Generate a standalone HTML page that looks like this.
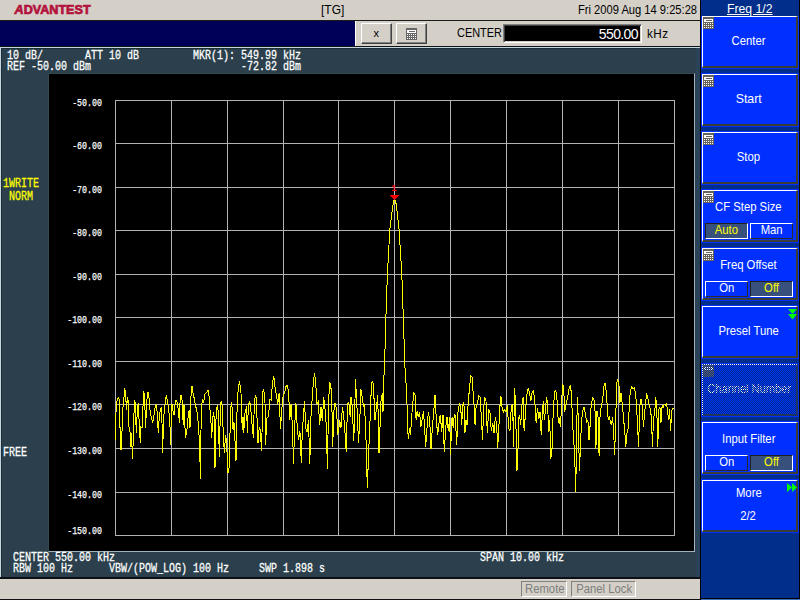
<!DOCTYPE html>
<html><head><meta charset="utf-8"><title>[TG]</title>
<style>
html,body{margin:0;padding:0;}
body{width:800px;height:600px;overflow:hidden;position:relative;background:#d4d0c8;font-family:"Liberation Sans",sans-serif;font-size:12px;color:#000;}
div,svg{position:absolute;box-sizing:border-box;}
.ui{white-space:nowrap;transform-origin:0 0;}
#navy{left:0;top:21px;width:355px;height:25px;background:#000058;}
#l20{left:0;top:20px;width:700px;height:1px;background:#1a1a1a;}
#l46{left:0;top:46px;width:700px;height:1px;background:#101418;}
#slate{left:0;top:47px;width:700px;height:530px;background:#2b3f4c;border-top:1px solid #c4d6dc;border-left:1px solid #c5d4e0;box-shadow:inset 1px 1px 0 #1c3038;}
#l578{left:0;top:577px;width:700px;height:2px;background:#0c1014;}
#plot{left:48px;top:73px;width:647px;height:479px;background:#000;border-top:1px solid #31494f;border-left:1px solid #31494f;border-right:1px solid #9fb4c0;border-bottom:1px solid #9fb4c0;}
#vsep{left:700px;top:0;width:1px;height:600px;background:#000;}
#vs2{left:696px;top:48px;width:4px;height:529px;background:#2b4359;}
#panel{left:701px;top:0;width:99px;height:600px;background:#002e8a;border-right:1px solid #000;}
#pb{left:701px;top:598px;width:99px;height:2px;background:#3c6ebe;border-top:1px solid #000;}
#gb{left:0;top:599px;width:700px;height:1px;background:#111;}
.mono{-webkit-text-stroke:.3px currentColor;font-family:"Liberation Mono",monospace;font-size:13.5px;line-height:12px;color:#fff;white-space:pre;transform:scaleX(.7407);transform-origin:0 0;letter-spacing:0;}
.yel{color:#ff0;}
.yl{-webkit-text-stroke:.25px #fff;left:38.5px;width:63px;text-align:right;font-family:"Liberation Mono",monospace;font-size:10.5px;line-height:10px;color:#fff;white-space:pre;transform:scaleX(.79);transform-origin:100% 0;}
.wb{background:#d4d0c8;border:1px solid;border-color:#fff #404040 #404040 #fff;box-shadow:inset -1px -1px 0 #808080;}
.bo{left:0;width:98px;height:54px;background:#0030ff;}
.btn{left:1px;top:1px;width:96px;height:52px;background:#0030ff;border-top:1px solid #fff;border-left:1px solid #fff;border-right:2px solid #3c3e36;border-bottom:2px solid #3c3e36;}
.bl{left:-1px;width:93px;text-align:center;color:#fff;font-size:13px;line-height:14px;white-space:nowrap;}
.ci{position:absolute;}
.bl span,.sb span,.st span{display:inline-block;transform:scaleX(.87);transform-origin:50% 50%;white-space:nowrap;}
.sb{top:32px;width:43px;height:16px;border:1px solid;border-color:#fff #2a2a2a #2a2a2a #fff;color:#fff;font-size:13px;line-height:11px;text-align:center;background:#0030ff;}
.sb.on{border-color:#202020 #fff #fff #202020;background:#38507c;color:#ff0;}
.dither{left:-1px;top:-1px;width:96px;height:52px;background-image:repeating-conic-gradient(#002e8a 0 25%,transparent 0 50%);background-size:2px 2px;}
.st{white-space:nowrap;top:581px;height:16px;border:1px solid;border-color:#808080 #fff #fff #808080;color:#7e7e7e;font-size:13px;line-height:13px;text-align:center;}
</style></head><body>
<div id="l20"></div><div style="left:355px;top:21px;width:1px;height:25px;background:#fff"></div><div id="navy"></div><div id="l46"></div>
<svg style="left:12px;top:3px" width="84" height="14" viewBox="0 0 84 14"><text x="2.6" y="10.7" font-family="Liberation Sans, sans-serif" font-weight="bold" font-size="12.5" fill="#b3123c" stroke="#b3123c" stroke-width="0.7" textLength="76" lengthAdjust="spacingAndGlyphs"><tspan font-style="italic">A</tspan>DVANTEST</text></svg>
<div class="ui" style="left:321px;top:2px;font-size:13px;transform:scaleX(.92)">[TG]</div>
<div class="ui" style="left:578px;top:2px;font-size:13px;transform:scaleX(.858)">Fri 2009 Aug 14 9:25:28</div>
<div class="wb" style="left:361px;top:23px;width:31px;height:21px;"><div class="ui" style="left:11.5px;top:3px;font-size:11px;line-height:12px">x</div></div>
<div class="wb" style="left:396px;top:23px;width:31px;height:21px;">
<svg class="ci" style="left:9px;top:4px" width="11" height="12" viewBox="0 0 11 12" shape-rendering="crispEdges"><rect width="11" height="12" fill="#666"/><rect x="1" y="2" width="9" height="3" fill="#fff"/><rect x="3" y="3" width="6" height="1" fill="#666"/><rect x="1" y="6" width="1" height="1" fill="#fff"/><rect x="3" y="6" width="1" height="1" fill="#fff"/><rect x="5" y="6" width="1" height="1" fill="#fff"/><rect x="7" y="6" width="1" height="1" fill="#fff"/><rect x="9" y="6" width="1" height="1" fill="#fff"/><rect x="1" y="8" width="1" height="1" fill="#fff"/><rect x="3" y="8" width="1" height="1" fill="#fff"/><rect x="5" y="8" width="1" height="1" fill="#fff"/><rect x="7" y="8" width="1" height="1" fill="#fff"/><rect x="9" y="8" width="1" height="1" fill="#fff"/><rect x="1" y="10" width="1" height="1" fill="#fff"/><rect x="3" y="10" width="1" height="1" fill="#fff"/><rect x="5" y="10" width="1" height="1" fill="#fff"/><rect x="7" y="10" width="1" height="1" fill="#fff"/><rect x="9" y="10" width="1" height="1" fill="#fff"/></svg></div>
<div class="ui" style="left:457px;top:25px;font-size:13px;transform:scaleX(.84)">CENTER</div>
<div style="left:503px;top:24px;width:139px;height:19px;background:#000;border:1px solid;border-color:#808080 #fff #fff #808080;box-shadow:inset 1px 1px 0 #404040, inset -1px -1px 0 #d4d0c8;"><div style="right:3px;top:2px;color:#fff;font-size:14px;line-height:14px;white-space:nowrap;letter-spacing:-.6px">550.00</div></div>
<div class="ui" style="left:647px;top:26px;font-size:13px;transform:scaleX(.9);letter-spacing:.5px">kHz</div>

<div id="slate"></div><div id="l578"></div>
<div id="plot"></div>
<svg style="left:0;top:0" width="700" height="600" viewBox="0 0 700 600">
<g shape-rendering="crispEdges"><rect x="115" y="100" width="1" height="436" fill="#b2b2b2"/><rect x="171" y="100" width="1" height="436" fill="#b2b2b2"/><rect x="227" y="100" width="1" height="436" fill="#b2b2b2"/><rect x="283" y="100" width="1" height="436" fill="#b2b2b2"/><rect x="338" y="100" width="1" height="436" fill="#b2b2b2"/><rect x="394" y="100" width="1" height="436" fill="#b2b2b2"/><rect x="450" y="100" width="1" height="436" fill="#b2b2b2"/><rect x="506" y="100" width="1" height="436" fill="#b2b2b2"/><rect x="562" y="100" width="1" height="436" fill="#b2b2b2"/><rect x="618" y="100" width="1" height="436" fill="#b2b2b2"/><rect x="674" y="100" width="1" height="436" fill="#b2b2b2"/><rect x="115" y="100" width="560" height="1" fill="#b2b2b2"/><rect x="115" y="143" width="560" height="1" fill="#b2b2b2"/><rect x="115" y="187" width="560" height="1" fill="#b2b2b2"/><rect x="115" y="230" width="560" height="1" fill="#b2b2b2"/><rect x="115" y="274" width="560" height="1" fill="#b2b2b2"/><rect x="115" y="317" width="560" height="1" fill="#b2b2b2"/><rect x="115" y="361" width="560" height="1" fill="#b2b2b2"/><rect x="115" y="404" width="560" height="1" fill="#b2b2b2"/><rect x="115" y="448" width="560" height="1" fill="#b2b2b2"/><rect x="115" y="492" width="560" height="1" fill="#b2b2b2"/><rect x="115" y="535" width="560" height="1" fill="#b2b2b2"/></g>
<polyline points="115.5,440.0 116.2,403.3 117.5,399.2 118.7,397.5 119.7,401.7 120.3,450.0 121.7,449.2 122.3,415.0 123.7,400.0 124.8,388.3 125.7,397.5 126.7,410.0 127.3,397.5 128.3,400.8 129.0,426.7 130.0,431.7 130.7,446.7 131.7,433.3 132.3,459.2 133.0,446.7 133.7,418.3 134.7,400.0 135.3,403.3 136.3,433.3 137.0,416.7 138.2,403.3 138.7,410.0 139.3,426.7 140.3,443.3 141.0,426.7 142.0,428.3 143.0,406.7 143.7,392.5 144.3,393.3 145.0,410.0 145.7,428.3 146.3,408.3 147.3,395.8 148.0,391.7 149.0,398.3 150.0,410.0 151.2,416.7 152.7,422.5 154.0,415.0 155.0,408.3 156.3,404.2 157.3,413.3 158.3,433.3 159.3,416.7 160.3,410.0 161.3,407.5 162.0,423.3 162.7,453.3 163.3,426.7 164.3,408.3 165.3,403.3 166.3,395.0 167.3,400.0 168.3,407.5 169.3,415.0 170.0,426.7 170.7,445.0 171.3,410.0 172.0,404.2 173.0,410.8 174.0,415.0 175.0,405.0 176.0,400.0 177.0,401.7 178.0,408.3 178.7,413.3 179.3,422.5 180.0,403.3 181.0,395.0 182.0,400.0 182.7,415.0 183.3,425.0 184.0,405.0 184.7,416.7 185.3,438.3 186.3,433.3 187.3,426.7 188.3,415.0 189.3,410.0 190.0,427.5 190.8,398.3 192.0,385.8 193.0,393.3 194.2,398.3 195.3,405.0 196.7,410.0 197.7,416.7 198.7,431.7 199.7,443.3 200.3,478.7 201.0,430.0 201.7,404.2 202.7,400.0 203.7,403.3 204.7,394.2 205.8,393.3 207.0,391.7 208.0,389.7 209.0,395.8 210.0,410.0 211.0,422.5 211.7,438.3 212.3,426.7 213.3,412.5 214.3,417.5 215.0,468.0 215.7,430.0 216.3,408.3 217.3,406.7 218.0,410.0 218.7,430.0 219.3,456.7 220.0,426.7 220.7,403.3 221.7,400.8 222.3,408.3 223.0,426.7 224.0,446.7 224.7,453.3 225.3,435.0 226.0,438.3 226.7,445.0 228.0,473.3 229.3,466.7 230.0,433.3 230.7,410.0 231.3,402.5 232.0,406.7 232.7,426.7 233.3,430.0 234.0,422.5 234.7,433.3 235.3,448.3 236.0,461.0 236.7,426.7 237.3,398.3 238.3,390.0 239.3,381.3 240.3,386.7 241.0,393.3 241.7,415.0 242.3,430.0 243.0,416.7 243.7,433.3 244.7,415.0 245.7,410.0 246.7,405.8 247.3,433.3 248.0,415.0 248.7,404.2 249.7,401.7 250.7,405.0 251.3,418.3 252.3,426.7 253.3,437.5 254.0,415.0 254.7,400.0 255.7,395.0 256.7,400.0 257.3,433.3 258.0,443.3 258.7,431.7 259.7,426.7 260.7,433.3 261.3,450.8 262.0,433.3 262.7,393.3 263.3,389.2 264.3,393.3 265.0,403.3 265.7,445.0 266.3,426.7 267.0,418.3 268.0,416.7 269.0,410.0 270.0,399.2 271.1,400.0 272.5,382.7 273.8,376.0 275.1,388.0 276.5,396.0 277.8,404.0 279.1,393.3 280.5,429.3 281.8,409.3 283.1,396.0 284.5,393.3 285.8,386.7 287.1,385.3 288.5,390.7 289.8,420.0 291.1,404.0 292.5,428.0 293.5,464.0 294.6,428.0 295.9,402.7 297.3,428.0 298.6,440.0 299.9,430.7 301.3,462.7 302.3,430.7 303.4,417.3 304.5,401.3 305.8,428.0 307.1,432.0 308.5,420.0 309.8,464.0 310.9,417.3 312.2,398.7 313.5,380.0 314.6,373.3 315.7,382.7 317.0,404.0 318.3,401.3 319.7,425.3 321.0,406.7 322.3,421.3 323.7,397.3 325.0,409.3 326.3,425.3 327.4,469.3 328.5,406.7 329.5,382.7 330.6,384.0 331.7,396.0 332.7,446.7 333.8,412.0 335.1,402.7 336.5,409.3 337.8,433.3 338.5,432.0 339.8,420.0 340.9,428.0 342.5,406.7 343.8,417.3 344.9,430.7 346.2,452.0 347.5,404.0 348.9,402.7 350.2,417.3 351.0,397.3 352.3,406.7 353.7,441.3 354.5,420.0 355.5,378.7 357.1,409.3 358.5,442.7 359.8,420.0 360.9,389.3 362.2,397.3 363.5,406.7 364.3,404.0 365.7,428.0 367.3,488.0 368.9,446.7 370.2,417.3 371.5,382.7 372.9,381.3 374.2,401.3 375.0,420.0 376.3,409.3 377.7,394.7 379.0,453.3 380.3,420.0 381.1,398.7 382.5,393.3 383.0,412.0 383.8,380.0 385.0,350 385.9,317.5 387.4,274 389.8,230 392.6,207 394,200.5 395.5,200.5 396.6,207 399.1,230 401.8,274 403.3,317.5 404.2,345 404.9,366.7 405.9,380.0 407.0,404.0 407.5,425.3 408.3,438.7 409.7,428.0 410.5,434.7 411.5,420.0 412.6,404.0 413.9,393.3 415.0,394.7 416.1,420.0 417.1,410.7 418.2,417.3 419.5,412.0 420.9,426.7 422.2,418.7 423.5,410.7 424.6,428.0 425.7,446.7 427.0,428.0 428.3,412.0 429.7,420.0 431.0,449.3 432.3,428.0 433.7,412.0 435.0,394.7 436.3,420.0 437.7,434.7 439.0,422.7 440.3,414.7 441.7,432.0 443.0,414.7 444.3,452.0 445.7,428.0 447.0,417.3 448.3,430.7 449.7,417.3 450.5,454.7 451.8,420.0 452.1,417.3 453.2,428.0 454.3,414.7 455.3,416.0 456.7,445.3 458.0,412.0 459.3,404.0 460.7,406.7 461.7,425.3 462.8,404.0 463.9,402.7 464.9,433.3 466.0,420.0 467.1,425.3 468.1,404.0 469.5,388.0 470.8,376.0 472.1,377.3 473.2,393.3 474.0,404.0 475.1,425.3 476.1,406.7 477.5,402.7 478.8,396.0 480.1,397.3 481.5,420.0 482.5,440.0 483.6,409.3 484.7,397.3 486.0,401.3 487.3,433.3 488.7,409.3 490.0,413.3 491.3,430.7 492.7,422.7 494.0,433.3 495.3,417.3 496.7,425.3 497.7,448.0 498.8,428.0 499.9,406.7 500.9,396.0 502.0,406.7 503.3,412.0 504.7,409.3 506.0,412.0 507.3,405.3 508.7,428.0 510.0,430.7 511.3,406.7 512.7,404.0 513.5,446.7 514.5,388.0 515.6,404.0 516.7,470.7 517.7,468.0 518.5,420.0 519.6,414.7 520.7,425.3 522.0,404.0 523.1,397.3 524.1,430.7 525.2,417.3 526.3,400.0 527.3,392.0 528.4,388.0 529.5,393.3 530.8,401.3 532.1,392.0 533.5,390.7 534.8,401.3 536.1,422.7 537.5,408.0 538.8,418.7 540.1,412.0 541.2,434.7 542.3,414.7 543.3,401.3 544.4,420.0 545.5,409.3 546.5,397.3 547.6,404.0 548.7,432.0 549.7,420.0 550.8,458.7 551.9,452.0 552.9,420.0 554.0,400.0 555.1,390.7 556.1,392.0 557.2,401.3 558.3,422.7 559.3,420.0 560.4,426.7 561.5,406.7 562.5,384.0 563.6,386.7 564.7,412.0 565.7,406.7 566.8,401.3 567.7,397.3 569.0,389.3 570.3,385.3 571.4,393.3 572.5,420.0 573.5,438.7 574.6,452.0 575.7,492.0 576.5,446.7 577.3,397.3 578.3,420.0 579.4,470.7 580.5,446.7 581.5,420.0 582.9,410.7 584.2,406.7 585.5,414.7 586.9,422.7 587.9,420.0 589.0,440.0 590.1,425.3 591.1,406.7 592.5,397.3 593.8,398.7 594.9,406.7 595.9,449.3 597.0,410.7 598.1,417.3 599.1,456.0 600.2,409.3 601.5,406.7 602.9,397.3 603.9,386.7 605.0,382.7 606.1,390.7 607.1,404.0 608.2,420.0 609.3,416.0 610.3,421.3 611.4,425.3 612.5,417.3 613.5,428.0 614.6,454.7 615.7,420.0 616.7,382.7 617.8,380.0 618.9,384.0 619.9,402.7 621.0,393.3 622.3,404.0 623.7,420.0 624.7,430.7 625.8,446.7 626.9,433.3 628.2,428.0 629.3,406.7 630.3,390.7 631.7,386.7 633.0,389.3 634.3,388.0 635.4,393.3 636.5,404.0 637.5,425.3 638.6,446.7 639.7,406.7 641.0,398.7 642.3,406.7 643.4,426.7 644.5,414.7 645.5,404.0 646.6,393.3 647.7,397.3 649.0,404.0 650.3,409.3 651.4,417.3 652.5,446.7 653.5,417.3 654.6,414.7 655.7,397.3 656.7,406.7 657.8,446.7 658.9,409.3 659.9,406.7 661.0,422.7 662.1,405.3 663.1,408.0 664.2,404.0 665.3,405.3 666.3,404.0 667.4,408.0 668.5,420.0 669.5,409.3 670.6,430.7 671.7,410.7 672.7,408.0 674.1,408.0" fill="none" stroke="#ffff00" stroke-width="1" stroke-linejoin="miter" shape-rendering="crispEdges"/>
<polygon points="389.5,195 399.5,195 394.5,200" fill="#f00"/>
<text x="391.3" y="190.9" style="font-family:'Liberation Sans',sans-serif;font-weight:bold;font-size:9.5px" fill="#f00">1</text>
</svg>
<div class="yl" style="top:97.5px">-50.00</div><div class="yl" style="top:140.5px">-60.00</div><div class="yl" style="top:184.5px">-70.00</div><div class="yl" style="top:227.5px">-80.00</div><div class="yl" style="top:271.5px">-90.00</div><div class="yl" style="top:314.5px">-100.00</div><div class="yl" style="top:358.5px">-110.00</div><div class="yl" style="top:401.5px">-120.00</div><div class="yl" style="top:445.5px">-130.00</div><div class="yl" style="top:489.5px">-140.00</div><div class="yl" style="top:526px">-150.00</div>
<div class="mono" style="left:7px;top:50px">10 dB/       ATT 10 dB         MKR(1): 549.99 kHz</div>
<div class="mono" style="left:7px;top:61px">REF -50.00 dBm                         -72.82 dBm</div>
<div class="mono yel" style="left:3px;top:178px">1WRITE</div>
<div class="mono yel" style="left:9px;top:191px">NORM</div>
<div class="mono" style="left:3px;top:447px">FREE</div>
<div class="mono" style="left:13px;top:552px">CENTER 550.00 kHz</div>
<div class="mono" style="left:13px;top:563px">RBW 100 Hz      VBW/(POW_LOG) 100 Hz     SWP 1.898 s</div>
<div class="mono" style="left:480px;top:552px">SPAN 10.00 kHz</div>
<div class="st" style="left:521px;width:46px;"><span>Remote</span></div>
<div class="st" style="left:571px;width:65px;"><span>Panel Lock</span></div>

<div id="vs2"></div><div id="gb"></div><div id="vsep"></div>
<div id="panel">
<div class="ui" style="left:26px;top:1px;font-size:13px;color:#fff;text-decoration:underline;transform:scaleX(.94)">Freq 1/2</div>
<div class="bo" style="top:16px;height:53px"><div class="btn" style="top:0"><svg class="ci" style="left:0px;top:0px" width="11" height="12" viewBox="0 0 11 12" shape-rendering="crispEdges"><rect width="11" height="12" fill="#67635a"/><rect x="1" y="2" width="9" height="3" fill="#fff"/><rect x="3" y="3" width="6" height="1" fill="#67635a"/><rect x="1" y="6" width="1" height="1" fill="#fff"/><rect x="3" y="6" width="1" height="1" fill="#fff"/><rect x="5" y="6" width="1" height="1" fill="#fff"/><rect x="7" y="6" width="1" height="1" fill="#fff"/><rect x="9" y="6" width="1" height="1" fill="#fff"/><rect x="1" y="8" width="1" height="1" fill="#fff"/><rect x="3" y="8" width="1" height="1" fill="#fff"/><rect x="5" y="8" width="1" height="1" fill="#fff"/><rect x="7" y="8" width="1" height="1" fill="#fff"/><rect x="9" y="8" width="1" height="1" fill="#fff"/><rect x="1" y="10" width="1" height="1" fill="#fff"/><rect x="3" y="10" width="1" height="1" fill="#fff"/><rect x="5" y="10" width="1" height="1" fill="#fff"/><rect x="7" y="10" width="1" height="1" fill="#fff"/><rect x="9" y="10" width="1" height="1" fill="#fff"/></svg><div class="bl" style="top:17px"><span>Center</span></div></div></div>
<div class="bo" style="top:73px"><div class="btn"><svg class="ci" style="left:0px;top:0px" width="11" height="12" viewBox="0 0 11 12" shape-rendering="crispEdges"><rect width="11" height="12" fill="#67635a"/><rect x="1" y="2" width="9" height="3" fill="#fff"/><rect x="3" y="3" width="6" height="1" fill="#67635a"/><rect x="1" y="6" width="1" height="1" fill="#fff"/><rect x="3" y="6" width="1" height="1" fill="#fff"/><rect x="5" y="6" width="1" height="1" fill="#fff"/><rect x="7" y="6" width="1" height="1" fill="#fff"/><rect x="9" y="6" width="1" height="1" fill="#fff"/><rect x="1" y="8" width="1" height="1" fill="#fff"/><rect x="3" y="8" width="1" height="1" fill="#fff"/><rect x="5" y="8" width="1" height="1" fill="#fff"/><rect x="7" y="8" width="1" height="1" fill="#fff"/><rect x="9" y="8" width="1" height="1" fill="#fff"/><rect x="1" y="10" width="1" height="1" fill="#fff"/><rect x="3" y="10" width="1" height="1" fill="#fff"/><rect x="5" y="10" width="1" height="1" fill="#fff"/><rect x="7" y="10" width="1" height="1" fill="#fff"/><rect x="9" y="10" width="1" height="1" fill="#fff"/></svg><div class="bl" style="top:17px"><span style="transform:scaleX(.95)">Start</span></div></div></div>
<div class="bo" style="top:131px"><div class="btn"><svg class="ci" style="left:0px;top:0px" width="11" height="12" viewBox="0 0 11 12" shape-rendering="crispEdges"><rect width="11" height="12" fill="#67635a"/><rect x="1" y="2" width="9" height="3" fill="#fff"/><rect x="3" y="3" width="6" height="1" fill="#67635a"/><rect x="1" y="6" width="1" height="1" fill="#fff"/><rect x="3" y="6" width="1" height="1" fill="#fff"/><rect x="5" y="6" width="1" height="1" fill="#fff"/><rect x="7" y="6" width="1" height="1" fill="#fff"/><rect x="9" y="6" width="1" height="1" fill="#fff"/><rect x="1" y="8" width="1" height="1" fill="#fff"/><rect x="3" y="8" width="1" height="1" fill="#fff"/><rect x="5" y="8" width="1" height="1" fill="#fff"/><rect x="7" y="8" width="1" height="1" fill="#fff"/><rect x="9" y="8" width="1" height="1" fill="#fff"/><rect x="1" y="10" width="1" height="1" fill="#fff"/><rect x="3" y="10" width="1" height="1" fill="#fff"/><rect x="5" y="10" width="1" height="1" fill="#fff"/><rect x="7" y="10" width="1" height="1" fill="#fff"/><rect x="9" y="10" width="1" height="1" fill="#fff"/></svg><div class="bl" style="top:17px"><span>Stop</span></div></div></div>
<div class="bo" style="top:189px"><div class="btn"><svg class="ci" style="left:0px;top:0px" width="11" height="12" viewBox="0 0 11 12" shape-rendering="crispEdges"><rect width="11" height="12" fill="#67635a"/><rect x="1" y="2" width="9" height="3" fill="#fff"/><rect x="3" y="3" width="6" height="1" fill="#67635a"/><rect x="1" y="6" width="1" height="1" fill="#fff"/><rect x="3" y="6" width="1" height="1" fill="#fff"/><rect x="5" y="6" width="1" height="1" fill="#fff"/><rect x="7" y="6" width="1" height="1" fill="#fff"/><rect x="9" y="6" width="1" height="1" fill="#fff"/><rect x="1" y="8" width="1" height="1" fill="#fff"/><rect x="3" y="8" width="1" height="1" fill="#fff"/><rect x="5" y="8" width="1" height="1" fill="#fff"/><rect x="7" y="8" width="1" height="1" fill="#fff"/><rect x="9" y="8" width="1" height="1" fill="#fff"/><rect x="1" y="10" width="1" height="1" fill="#fff"/><rect x="3" y="10" width="1" height="1" fill="#fff"/><rect x="5" y="10" width="1" height="1" fill="#fff"/><rect x="7" y="10" width="1" height="1" fill="#fff"/><rect x="9" y="10" width="1" height="1" fill="#fff"/></svg><div class="bl" style="top:9px"><span>CF Step Size</span></div><div class="sb on" style="left:2px"><span>Auto</span></div><div class="sb " style="left:47px"><span>Man</span></div></div></div>
<div class="bo" style="top:247px"><div class="btn"><svg class="ci" style="left:0px;top:0px" width="11" height="12" viewBox="0 0 11 12" shape-rendering="crispEdges"><rect width="11" height="12" fill="#67635a"/><rect x="1" y="2" width="9" height="3" fill="#fff"/><rect x="3" y="3" width="6" height="1" fill="#67635a"/><rect x="1" y="6" width="1" height="1" fill="#fff"/><rect x="3" y="6" width="1" height="1" fill="#fff"/><rect x="5" y="6" width="1" height="1" fill="#fff"/><rect x="7" y="6" width="1" height="1" fill="#fff"/><rect x="9" y="6" width="1" height="1" fill="#fff"/><rect x="1" y="8" width="1" height="1" fill="#fff"/><rect x="3" y="8" width="1" height="1" fill="#fff"/><rect x="5" y="8" width="1" height="1" fill="#fff"/><rect x="7" y="8" width="1" height="1" fill="#fff"/><rect x="9" y="8" width="1" height="1" fill="#fff"/><rect x="1" y="10" width="1" height="1" fill="#fff"/><rect x="3" y="10" width="1" height="1" fill="#fff"/><rect x="5" y="10" width="1" height="1" fill="#fff"/><rect x="7" y="10" width="1" height="1" fill="#fff"/><rect x="9" y="10" width="1" height="1" fill="#fff"/></svg><div class="bl" style="top:9px"><span>Freq Offset</span></div><div class="sb " style="left:2px"><span>On</span></div><div class="sb on" style="left:47px"><span>Off</span></div></div></div>
<div class="bo" style="top:305px"><div class="btn"><div class="bl" style="top:17px"><span>Presel Tune</span></div><svg class="ci" style="left:85px;top:2px" width="10" height="11"><polygon points="0,0 9,0 4.5,5" fill="#0f0"/><polygon points="0,5 9,5 4.5,10.5" fill="#0f0"/></svg></div></div>
<div class="bo" style="top:363px"><div class="btn dis"><svg class="ci" style="left:0px;top:0px" width="11" height="12" viewBox="0 0 11 12" shape-rendering="crispEdges"><rect width="11" height="12" fill="#67635a"/><rect x="1" y="2" width="9" height="3" fill="#fff"/><rect x="3" y="3" width="6" height="1" fill="#67635a"/><rect x="1" y="6" width="1" height="1" fill="#fff"/><rect x="3" y="6" width="1" height="1" fill="#fff"/><rect x="5" y="6" width="1" height="1" fill="#fff"/><rect x="7" y="6" width="1" height="1" fill="#fff"/><rect x="9" y="6" width="1" height="1" fill="#fff"/><rect x="1" y="8" width="1" height="1" fill="#fff"/><rect x="3" y="8" width="1" height="1" fill="#fff"/><rect x="5" y="8" width="1" height="1" fill="#fff"/><rect x="7" y="8" width="1" height="1" fill="#fff"/><rect x="9" y="8" width="1" height="1" fill="#fff"/><rect x="1" y="10" width="1" height="1" fill="#fff"/><rect x="3" y="10" width="1" height="1" fill="#fff"/><rect x="5" y="10" width="1" height="1" fill="#fff"/><rect x="7" y="10" width="1" height="1" fill="#fff"/><rect x="9" y="10" width="1" height="1" fill="#fff"/></svg><div class="bl" style="top:17px;left:-3px"><span style="transform:scaleX(.85)">Channel Number</span></div><div class="dither"></div></div></div>
<div class="bo" style="top:421px"><div class="btn"><div class="bl" style="top:9px"><span>Input Filter</span></div><div class="sb " style="left:2px"><span>On</span></div><div class="sb on" style="left:47px"><span>Off</span></div></div></div>
<div class="bo" style="top:479px"><div class="btn"><div class="bl" style="top:5px"><span>More</span></div><div class="bl" style="top:28px"><span>2/2</span></div><svg class="ci" style="left:84px;top:2px" width="11" height="10"><polygon points="0,0 5,4.5 0,9" fill="#0f0"/><polygon points="5,0 10,4.5 5,9" fill="#0f0"/></svg></div></div>

</div><div id="pb"></div>
</body></html>
